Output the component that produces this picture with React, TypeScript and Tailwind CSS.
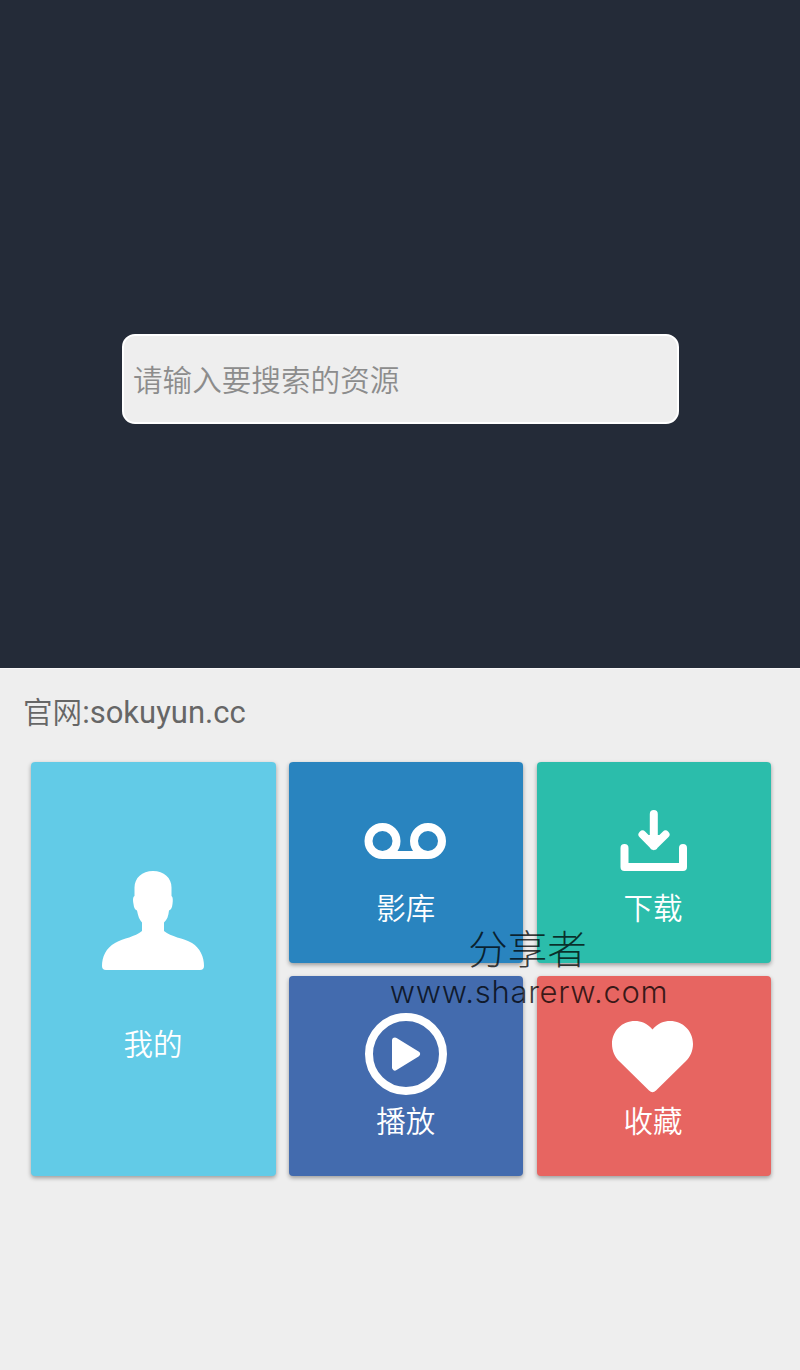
import type { ReactNode } from "react";

const cjk = "font-['Roboto','Noto_Sans_CJK_SC',sans-serif]";

function Tile({ color, label, icon, className = "" }: { color: string; label: string; icon: ReactNode; className?: string }) {
  return (
    <button
      type="button"
      className={`flex flex-col items-center rounded-[4px] text-[29.5px] leading-[44px] font-[350] text-white shadow-[0_2px_4px_rgba(0,0,0,0.35)] ${color} ${className}`}
    >
      {icon}
      <span className="mr-px font-['Noto_Sans_CJK_SC',sans-serif]">{label}</span>
    </button>
  );
}

function PersonIcon() {
  return (
    <svg className="mr-[2px] mb-[50px] h-[100px] w-[104px]" viewBox="0 0 104 100" fill="#fff">
      <path d="M52 1C41 1 33.500 8 33.500 17.500V26C31.500 27 32 31 32.500 34C33 38 34 40 36 40.500C37 46 38.500 50 41 52.500V61C34 67 23 68 14 73C5 78 1 87 1 96Q1 100 5 100H99Q103 100 103 96C103 87 99 78 91 73C82 68 70 67 63 61V52.500C66 50 67.500 46 68 40.500C70 40 71 38 71.500 34C72 30 72 27 70.500 26V17.500C70.500 8 63 1 52 1Z" />
    </svg>
  );
}

function TapeIcon() {
  return (
    <svg className="mr-[2px] h-[84px] w-[84px]" viewBox="0 0 84 84" fill="none" stroke="#fff" strokeWidth="8">
      <circle cx="19.500" cy="41" r="14" />
      <circle cx="65" cy="41" r="14" />
      <path d="M19.500 55H65" />
    </svg>
  );
}

function DownloadIcon() {
  return (
    <svg className="mr-[2px] h-[84px] w-[84px]" viewBox="0 0 84 84" fill="none" stroke="#fff" strokeWidth="8" strokeLinecap="round" strokeLinejoin="round">
      <path d="M13.500 48V67H72V48" />
      <path d="M42.800 14V46M31.500 34.500L42.800 46L54.500 34.500" />
      <path d="M36 37L42.800 44L49.500 37Z" fill="#fff" strokeWidth="4" />
    </svg>
  );
}

function PlayIcon() {
  return (
    <svg className="mb-[1px] h-[84px] w-[84px]" viewBox="0 0 84 84">
      <circle cx="42" cy="42" r="37" fill="none" stroke="#fff" strokeWidth="8" />
      <path d="M31 28.500L53 42L31 55.500Z" fill="#fff" stroke="#fff" strokeWidth="6" strokeLinejoin="round" />
    </svg>
  );
}

function HeartIcon() {
  return (
    <svg className="mr-[2px] mb-[1px] h-[84px] w-[84px]" viewBox="0 0 84 84" fill="#fff">
      <path d="M41.500 17.500C36 11 30 9 24 9C11 9 1 19 1 32C1 39 4 45 8 49L38 78.500Q41.500 82 45 78.500L75 49C79 45 82 39 82 32C82 19 72 9 59 9C53 9 47 11 41.500 17.500Z" />
    </svg>
  );
}

export default function App() {
  return (
    <div className={`relative h-[1370px] w-[800px] overflow-hidden bg-[#eee] ${cjk}`}>
      <header className="flex h-[669px] items-start justify-center border-b border-[#f8f8f8] bg-[#242b38] pt-[334px] pl-[1px]">
        <input
          type="text"
          placeholder="请输入要搜索的资源"
          className="h-[90px] w-[557px] rounded-[13px] border-2 border-white bg-[#eee] px-[9px] pb-px font-['Noto_Sans_CJK_SC',sans-serif] text-[29.6px] font-[350] text-[#666] outline-none placeholder:text-[#8c8c8c]"
        />
      </header>
      <main>
        <p className="flex h-[93px] items-start pt-[20px] pl-[23px] text-[31px] leading-[46px] text-[#666]">
          <span className="-mt-px font-['Noto_Sans_CJK_SC',sans-serif] text-[29.600px] font-[350]">官网</span>
          <span className="pt-px">:sokuyun.cc</span>
        </p>
        <div className="ml-[31px] grid w-[740px] grid-cols-[245px_234px_234px] grid-rows-[201px_200px] gap-x-[13.250px] gap-y-[13px]">
          <Tile color="bg-[#62cbe7]" label="我的" icon={<PersonIcon />} className="row-span-2 pt-[108px]" />
          <Tile color="bg-[#2984bf]" label="影库" icon={<TapeIcon />} className="pt-[38px]" />
          <Tile color="bg-[#2bbdab]" label="下载" icon={<DownloadIcon />} className="pt-[38px]" />
          <Tile color="bg-[#436bae]" label="播放" icon={<PlayIcon />} className="pt-[36px]" />
          <Tile color="bg-[#e76561]" label="收藏" icon={<HeartIcon />} className="pt-[36px]" />
        </div>
      </main>
      <div className="pointer-events-none absolute top-[928px] left-[389px] flex w-[280px] flex-col items-center whitespace-nowrap text-black/75">
        <span className="mr-[3px] text-[39.500px] leading-[46px] font-light">分享者</span>
        <span className="font-['Inter',sans-serif] text-[31px] leading-[36px] font-light tracking-[0.700px]">www.sharerw.com</span>
      </div>
    </div>
  );
}
